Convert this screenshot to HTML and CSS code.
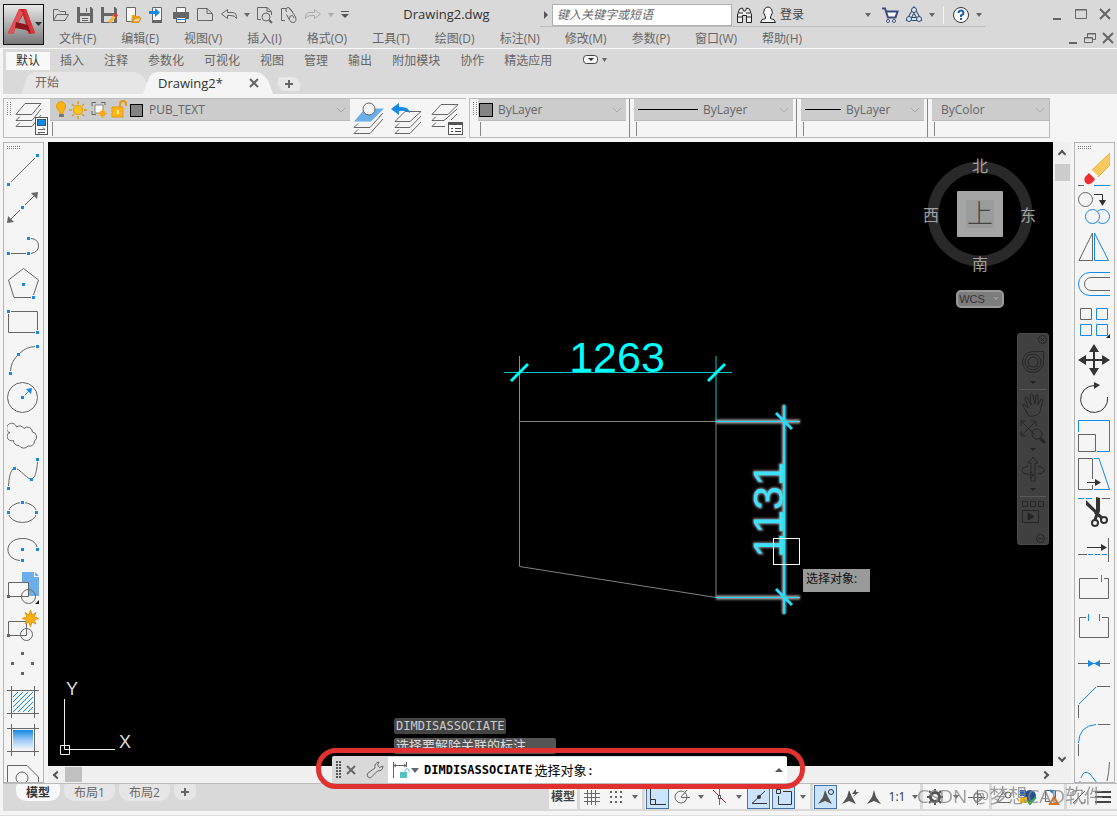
FILE: index.html
```
<!DOCTYPE html>
<html lang="zh-CN">
<head>
	<meta charset="utf-8">
	<title>Drawing2.dwg</title>
	<link rel="stylesheet" href="styles.css">
</head>
<body>

	<header class="header">
		<button class="logo" aria-label="应用程序菜单">
			<svg width="39" height="39" viewBox="0 0 39 39">
				<path d="M4 28 L15 4 H22 L31 28 L25 29 L22 23 L12 22 L9 29 Z" fill="#c4262c"/>
				<path d="M15 4 L19 8 L9 29 L4 28 Z" fill="#e05055"/>
				<path d="M19 10 L22 20 L13 20 Z" fill="#a5a5a5"/>
				<path d="M12 17 L24 20 L28 28 L22 25 L11 23 Z" fill="#8d151b"/>
				<path d="M19 4 H22 L31 28 L27 29 Z" fill="#d93439"/>
				<path d="M31 17 h7 l-3.500 4 z" fill="#333"/>
			</svg>
		</button>
		<div class="header-rows">
			<div class="title-row">
				<div class="quick">
					<button class="tool" aria-label="打开"><svg width="18" height="18"><path class="ink" d="M1.500 14.500 V3.500 H6 L8 5.500 H13.500 V8.500 M1.500 14.500 L5 8.500 H16.500 L13 14.500 Z"/></svg></button>
					<button class="tool" aria-label="保存"><svg width="18" height="18"><path d="M1 1 H15 L17 3 V17 H1 Z" fill="#666"/><path d="M4 1 h10 v6 h-10 z M4 10 h10 v6 h-10 z" fill="#d9d9d9"/><path class="ink" d="M6 12.500 h6 M6 14.500 h6 M10.500 2 v4"/></svg></button>
					<button class="tool" aria-label="另存为"><svg width="18" height="18"><path d="M1 1 H15 L17 3 V17 H1 Z" fill="#666"/><path d="M4 1 h10 v6 h-10 z M4 10 h10 v6 h-10 z" fill="#d9d9d9"/><path d="M8 16 L14 8 L17 10 L11 17 Z" fill="#f2b544"/><path d="M13 9 l2 -2 l3 2 l-2 3 z" fill="#e03030"/></svg></button>
					<button class="tool" aria-label="从云打开"><svg width="18" height="18"><path class="page" d="M2.500 1.500 H11.500 V15.500 H2.500 Z"/><path d="M8 9 h3 l1 1 h4 l-1 7 h-8 z" fill="#e8a317"/><path d="M9 15 l2 -3 h6 l-2 4 h-7z" fill="#f5d08a" stroke="#c98a10"/></svg></button>
					<button class="tool" aria-label="保存到云"><svg width="18" height="18"><path class="page" d="M4.500 1.500 H13.500 V16.500 H4.500 Z"/><path d="M4 14 h10 v3 h-10z" fill="#666"/><path d="M1 5 H7 V2 L12 6.500 L7 11 V8 H1 Z" fill="#1589e6"/></svg></button>
					<button class="tool" aria-label="打印"><svg width="18" height="18"><path class="page" d="M4.500 1.500 h9 v5 h-9 z"/><path d="M1 6 h16 v7 h-3 v-2 h-10 v2 h-3 z" fill="#666"/><path class="page" d="M4.500 11.500 h9 v5 h-9 z"/><path class="blue" d="M5 13.500 h8"/></svg></button>
					<button class="tool" aria-label="新建"><svg width="18" height="18"><path class="ink" d="M1.500 2.500 H11 L16.500 7.500 V14.500 H1.500 Z M11 2.500 V7.500 H16"/></svg></button>
					<button class="tool" aria-label="放弃"><svg width="18" height="18"><path class="ink" d="M1.500 8 L7.500 3.500 V6.500 H13 Q16.500 7 16.500 10.500 V12.500 Q15 9.500 11 9.500 H7.500 V12.500 Z"/></svg></button>
					<button class="drop" aria-label="放弃列表"></button>
					<button class="tool" aria-label="打印预览"><svg width="18" height="18"><path class="ink" d="M5 13.500 H1.500 V1.500 H11 L15.500 5.500 V9 M11 1.500 V5.500 H15"/><circle class="ink" cx="10" cy="11" r="4"/><path class="ink" stroke-width="2" d="M13 14 L16 17"/></svg></button>
					<button class="tool" aria-label="附着"><svg width="18" height="18"><path class="ink" d="M5 14.500 H1.500 V2.500 H6 M9 2.500 L13 6"/><path class="ink" d="M6.500 6 Q5 2 8 1.500 Q10 1.500 11 4 L15.500 11 Q17 15 14 16.500 Q10.500 17 9.500 14 L6.500 8.500 M9.500 13 Q9 9.500 12 9.500 Q13.500 10 14 12"/></svg></button>
					<button class="tool off" aria-label="重做"><svg width="18" height="18"><path class="ink" d="M16.500 8 L10.500 3.500 V6.500 H5 Q1.500 7 1.500 10.500 V12.500 Q3 9.500 7 9.500 H10.500 V12.500 Z"/></svg></button>
					<button class="drop off" aria-label="重做列表"></button>
					<button class="custom" aria-label="自定义快速访问工具栏"><svg width="8" height="8"><path d="M0 0 h8 v1 h-8z M0 3 h8 l-4 4 z" fill="#555"/></svg></button>
				</div>
				<h1 class="title">Drawing2.dwg</h1>
				<div class="info">
					<button class="side-arrow" aria-label="展开搜索"></button>
					<input class="search" type="text" placeholder="键入关键字或短语" aria-label="搜索">
					<button class="tool" aria-label="查找"><svg width="18" height="18"><path d="M2.500 16.500 V9 L4.500 3 L7.500 2 L8.500 5 H10.500 L11.500 2 L14.500 3 L16.500 9 V16.500 H11.500 V9.500 H7.500 V16.500 Z" fill="#eee" stroke="#222"/><path d="M2 11 h5 M12 11 h5 M4 7 h4 M11 7 h4" stroke="#222"/></svg></button>
					<button class="tool" aria-label="用户"><svg width="18" height="18"><path d="M6.500 11 Q3 6 5.500 3 Q9 -1 12.500 3 Q15 6 11.500 11 V12.500 Q16 13 16.500 16.500 H1.500 Q2 13 6.500 12.500 Z" fill="#f8f8f8" stroke="#222"/></svg></button>
					<a class="login" href="#">登录</a>
					<button class="drop" aria-label="登录选项"></button>
					<button class="tool cart" aria-label="应用商店"><svg width="18" height="18"><path d="M1 2.500 H4 L7 11.500 H14.500 L16.500 5.500 H5" fill="#fff" stroke="#394d78" stroke-width="2"/><circle cx="7" cy="15" r="1.500" fill="#fff" stroke="#394d78"/><circle cx="13" cy="15" r="1.500" fill="#fff" stroke="#394d78"/></svg></button>
					<button class="tool" aria-label="保持连接"><svg width="18" height="18"><path d="M9 4 L4 13 H14 Z" fill="none" stroke="#334b68" stroke-width="4"/><path d="M9 4 L4 13 H14 Z" fill="none" stroke="#d8e4f0" stroke-width="2"/><circle cx="9" cy="4" r="2.500" fill="#d8e4f0" stroke="#334b68"/><circle cx="4" cy="13" r="2.500" fill="#d8e4f0" stroke="#334b68"/><circle cx="14" cy="13" r="2.500" fill="#d8e4f0" stroke="#334b68"/></svg></button>
					<button class="drop" aria-label="连接选项"></button>
					<span class="divider"></span>
					<button class="tool" aria-label="帮助"><svg width="18" height="18"><circle cx="9" cy="9" r="7.500" fill="#fff" stroke="#333"/><path d="M6.500 7 Q6.500 4.500 9 4.500 Q11.500 4.500 11.500 7 Q11.500 8.500 9 9.500 V11 M9 12 V14" fill="none" stroke="#1a5fb4" stroke-width="2"/></svg></button>
					<button class="drop" aria-label="帮助选项"></button>
				</div>
				<div class="win">
					<button class="tool" aria-label="最小化"><svg width="18" height="18"><path d="M5 14 h8" class="heavy"/></svg></button>
					<button class="tool" aria-label="最大化"><svg width="18" height="18"><path d="M3.500 4.500 h11 v9 h-11 z M3 5 h12" class="ink"/></svg></button>
					<button class="tool" aria-label="关闭"><svg width="18" height="18"><path d="M4 4 L14 14 M14 4 L4 14" class="heavy"/></svg></button>
				</div>
			</div>
			<div class="menu-row">
				<nav class="menu">
					<a href="#">文件(F)</a>
					<a href="#">编辑(E)</a>
					<a href="#">视图(V)</a>
					<a href="#">插入(I)</a>
					<a href="#">格式(O)</a>
					<a href="#">工具(T)</a>
					<a href="#">绘图(D)</a>
					<a href="#">标注(N)</a>
					<a href="#">修改(M)</a>
					<a href="#">参数(P)</a>
					<a href="#">窗口(W)</a>
					<a href="#">帮助(H)</a>
				</nav>
				<div class="doc-win">
					<button aria-label="最小化图形"><svg width="18" height="18"><path d="M6 14 h8" class="heavy"/></svg></button>
					<button aria-label="还原图形"><svg width="18" height="18"><path d="M3.500 8.500 h8 v5 h-8 z M3 9 h9 M6.500 8 V4.500 h8 v6 H12 M6 5 h9" class="ink"/></svg></button>
					<button aria-label="关闭图形"><svg width="18" height="18"><path d="M4 4 L14 14 M14 4 L4 14" class="heavy"/></svg></button>
				</div>
			</div>
		</div>
	</header>

	<div class="ribbon">
		<nav class="ribbon-tabs">
			<a class="current" href="#">默认</a>
			<a href="#">插入</a>
			<a href="#">注释</a>
			<a href="#">参数化</a>
			<a href="#">可视化</a>
			<a href="#">视图</a>
			<a href="#">管理</a>
			<a href="#">输出</a>
			<a href="#">附加模块</a>
			<a href="#">协作</a>
			<a href="#">精选应用</a>
			<button class="ribbon-min" aria-label="最小化功能区"><svg width="26" height="10"><rect x="0.500" y="0.500" width="14" height="8" rx="3" fill="#f5f5f5" stroke="#444"/><path d="M5 3 h6 l-3 3 z" fill="#333"/><path d="M19 3 h5 l-2.500 4 z" fill="#666"/></svg></button>
		</nav>
		<div class="file-tabs">
			<a class="file-tab" href="#">开始</a>
			<div class="file-tab active">
				<a href="#">Drawing2*</a>
				<button aria-label="关闭选项卡"><svg width="10" height="10"><path d="M1 1 L9 9 M9 1 L1 9" class="heavy"/></svg></button>
			</div>
			<button class="add-tab" aria-label="新图形"><svg width="10" height="10"><path d="M1 5 H9 M5 1 V9" class="heavy"/></svg></button>
		</div>
	</div>

	<!-- layers and properties -->
	<div class="bars">
		<div class="bar">
			<span class="grip"></span>
			<button class="big" aria-label="图层特性">
				<svg width="34" height="36"><path class="ink" d="M2 14.500 L11 3.500 H27 L18 14.500 Z M6 16.500 L2 20.500 H18 L27 9 M6 22.500 L2 26.500 H18 L27 15"/><rect x="21.500" y="17.500" width="12" height="17" fill="#fff" stroke="#555"/><rect x="23.500" y="19.500" width="8" height="6" fill="#1589e6" stroke="#2a5a90"/><path class="ink" d="M24 29.500 h7 m-2 -2 l2 2 M31 32.500 h-7 m2 2 l-2 -2"/></svg>
			</button>
			<div class="field-wrap layer">
				<div class="field">
					<svg width="90" height="20">
						<path d="M6 12 Q1 7 3 4 Q7 -1 11 4 Q13 7 8 14 H6 Z" fill="#f9b414" stroke="#e09a10"/><path d="M5 14 h5 v3 h-5z" fill="#777"/>
						<circle cx="24" cy="10" r="4.500" fill="#ffc414" stroke="#e59b10"/><path d="M24 1 v3 M24 16 v3 M15 10 h3 M30 10 h3 M18 4 l2 2 M30 4 l-2 2 M18 16 l2 -2 M30 16 l-2 -2" stroke="#e59b10" stroke-width="1.500"/>
						<path class="ink" d="M38 6 V2.500 H42 M47 2.500 H51 V5 M38 11 V14.500 H42"/><path d="M41 5 h8 v5 l-3 3 h-5z" fill="#fff" stroke="#888"/><circle cx="48.500" cy="13.500" r="3" fill="#f3a51c"/><path d="M48.500 9 v9 M44 13.500 h9" stroke="#f3a51c"/>
						<path d="M66 8 V4 Q66 1 69 1 Q72 1 72 4 V6" fill="none" stroke="#e59b10" stroke-width="2"/><path d="M58 7 h11 v10 h-11z" fill="#fbb614" stroke="#e59b10"/><path d="M63 10 h1.500 v4 h-1.500z" fill="#fff"/>
						<rect x="76.500" y="4.500" width="12" height="12" fill="#848484" stroke="#000"/>
					</svg>
					<select aria-label="图层"><option>PUB_TEXT</option></select>
					<svg class="chev" width="10" height="6"><path d="M1 1 L5 5 L9 1"/></svg>
				</div>
			</div>
			<button class="big" aria-label="置为当前图层"><svg width="34" height="36"><path d="M2 21.500 L13 8.500 H32 L19 21.500 Z" fill="#6cafe8"/><circle cx="17" cy="9" r="6" fill="#f5f5f5" stroke="#666"/><path class="ink" d="M6 23.500 L2 27.500 H18 L31 13 M6 29.500 L2 33.500 H18 L31 19 M31 13 L27 17"/></svg></button>
			<button class="big wide" aria-label="上一个图层"><svg width="34" height="36"><path class="ink" d="M4 21.500 L14 11.500 H30 L19 21.500 Z M8 23.500 L4 27.500 H19 L30 16 M8 29.500 L4 33.500 H19 L30 22"/><path d="M0 9 L8 3 V7 Q18 6 19 13 Q15 10 8 11 V15 Z" fill="#1589e6"/></svg></button>
			<button class="big" aria-label="图层状态"><svg width="34" height="36"><path class="ink" d="M2 14.500 L11 4.500 H28 L18 14.500 Z M6 16.500 L2 20.500 H14 L27 9 M6 22.500 L2 26.500 H15 M21 20 L27 14"/><rect x="18.500" y="22.500" width="14" height="12" fill="#fff" stroke="#555"/><path d="M18 23.500 h15" stroke="#555" stroke-width="3"/><path d="M21 28.500 h2 M25 28.500 h6 M21 31.500 h2 M25 31.500 h6" stroke="#444"/></svg></button>
		</div>
		<div class="bar props">
			<span class="grip"></span>
			<div class="field-wrap color">
				<div class="field">
					<span class="swatch"></span>
					<select aria-label="颜色"><option>ByLayer</option></select>
					<svg class="chev" width="10" height="6"><path d="M1 1 L5 5 L9 1"/></svg>
				</div>
			</div>
			<div class="field-wrap line">
				<div class="field">
					<span class="sample long"></span>
					<select aria-label="线型"><option>ByLayer</option></select>
					<svg class="chev" width="10" height="6"><path d="M1 1 L5 5 L9 1"/></svg>
				</div>
			</div>
			<div class="field-wrap weight">
				<div class="field">
					<span class="sample"></span>
					<select aria-label="线宽"><option>ByLayer</option></select>
					<svg class="chev" width="10" height="6"><path d="M1 1 L5 5 L9 1"/></svg>
				</div>
			</div>
			<div class="field-wrap plot">
				<div class="field">
					<select aria-label="打印样式"><option>ByColor</option></select>
					<svg class="chev" width="10" height="6"><path d="M1 1 L5 5 L9 1"/></svg>
				</div>
			</div>
		</div>
	</div>

	<main class="work">
		<!-- draw toolbar -->
		<div class="palette">
			<span class="grip-h"></span>
			<button aria-label="直线"><svg width="32" height="38"><path class="ink" d="M4 31 L28 7"/><path class="node" d="M0 32h3v3h-3z M29 3h3v3h-3z"/></svg></button>
			<button aria-label="构造线"><svg width="32" height="38"><path class="ink" d="M3 31 L13 21 M18 16 L28 6"/><path class="solid" d="M0 34 L1 27 L7 33 Z M31 3 L24 4 L30 10 Z"/><path class="node" d="M14 17h3v3h-3z"/></svg></button>
			<button aria-label="多段线"><svg width="32" height="38"><path class="ink" d="M4 26.500 H19 M24 26.500 Q31.500 25 31.500 19 Q31.500 12 24 11.500"/><path class="node" d="M0 25h3v3h-3z M20 25h3v3h-3z M20 10h3v3h-3z"/></svg></button>
			<button aria-label="多边形"><svg width="32" height="38"><path class="ink" d="M26.500 30 L31.500 15 L16.500 3.500 L1.500 15 L7 32.500 H24"/><path class="node" d="M15 18h3v3h-3z M25 31h3v3h-3z"/></svg></button>
			<button aria-label="矩形"><svg width="32" height="38"><path class="ink" d="M4 8.500 H30.500 V27 M28 29.500 H1.500 V11"/><path class="node" d="M0 7h3v3h-3z M29 28h3v3h-3z"/></svg></button>
			<button aria-label="圆弧"><svg width="32" height="38"><path class="ink" d="M3.500 30 Q4 21 10 15 M13 12 Q19 6 28 5.500"/><path class="node" d="M2 31h3v3h-3z M10 12h3v3h-3z M29 4h3v3h-3z"/></svg></button>
			<button aria-label="圆"><svg width="32" height="38"><circle class="ink" cx="15.500" cy="18.500" r="15"/><path class="blue" d="M18 16 L23 11"/><path d="M25 9 L19 10 L24 15 Z M14 17h3v3h-3z" class="node"/></svg></button>
			<button aria-label="修订云线"><svg width="32" height="38"><path class="ink" d="M3 16 A5 5 0 1 1 9.500 10 A5 5 0 0 1 17 11.500 A5 5 0 0 1 25.500 15 A5 5 0 0 1 27.500 24 A5 5 0 0 1 21 29 A5.500 5.500 0 0 1 12 28.500 A5 5 0 0 1 6.500 23.500 A4.500 4.500 0 0 1 3 15"/></svg></button>
			<button aria-label="样条曲线"><svg width="32" height="38"><path class="ink" d="M1.500 31 C2 23 3 17 6 14 M10 14 C13 15 19 22 23 24 M26 23 C29 21 30 13 30.500 7"/><path class="node" d="M0 32h3v3h-3z M6 12h3v3h-3z M23 23h3v3h-3z M29 3h3v3h-3z"/></svg></button>
			<button aria-label="椭圆"><svg width="32" height="38"><ellipse class="ink" cx="15.500" cy="19.500" rx="14" ry="10"/><path class="node halo" d="M14 8h3v3h-3z M0 18h3v3h-3z M28 18h3v3h-3z"/></svg></button>
			<button aria-label="椭圆弧"><svg width="32" height="38"><path class="ink" d="M13 29.500 C-4 28 -3 7.500 15.500 7.500 C23 7.500 29 11 30 16"/><path class="node" d="M14 17h3v3h-3z M29 17h3v3h-3z M14 28h3v3h-3z"/></svg></button>
			<button aria-label="插入块"><svg width="32" height="38"><path d="M15 3 H27 V8 H32 V27 H15 Z M28 3 L32 7 H28 Z" fill="#6cafe8"/><path class="page" d="M1.500 13.500 H21.500 V27.500 H1.500 Z"/><circle class="ink" cx="21.500" cy="27.500" r="7"/><path class="solid" d="M0 26h3v3h-3z"/><path d="M32 31 V35 H28 Z" fill="#222"/></svg></button>
			<button aria-label="创建块"><svg width="32" height="38"><path class="ink" d="M1.500 14.500 H19.500 V28.500 H1.500 Z"/><circle class="ink" cx="19.500" cy="27.500" r="6"/><path d="M23.500 3 L25 8 L29 5.500 L27 10 L32 11.500 L27 13 L29 17 L25 15 L23.500 20 L22 15 L18 17 L20 13 L15 11.500 L20 10 L18 5.500 L22 8 Z" fill="#f9b014" stroke="#e09a10"/><path class="solid" d="M0 27h3v3h-3z"/></svg></button>
			<button aria-label="点"><svg width="32" height="38"><path class="solid" d="M14 7h3v3h-3z M4 17h3v3h-3z M24 17h3v3h-3z M14 27h3v3h-3z"/></svg></button>
			<button aria-label="图案填充"><svg width="32" height="38"><path class="ink" d="M0 7.500 H32 M0 30.500 H32 M4.500 3 V35 M27.500 3 V35"/><path class="blue" d="M6 14 L11 9 M6 19 L16 9 M6 24 L21 9 M6 29 L26 9 M11 29 L26 14 M16 29 L26 19 M21 29 L26 24"/></svg></button>
			<button aria-label="渐变色"><svg width="32" height="38"><defs><linearGradient id="fade" x2="0" y2="1"><stop offset="0" stop-color="#1589e6"/><stop offset="0.500" stop-color="#9ec8f6"/><stop offset="1" stop-color="#f5f5f5"/></linearGradient></defs><path class="ink" d="M0 7.500 H32 M0 30.500 H32 M4.500 3 V35 M27.500 3 V35"/><rect x="6" y="9" width="20" height="20" fill="url(#fade)"/></svg></button>
			<button aria-label="面域"><svg width="32" height="38"><path class="ink" d="M0.500 34 V6.500 H20 L31.500 18 V34"/><circle class="ink" cx="15" cy="19" r="6"/></svg></button>
		</div>

		<div class="view">
			<div class="canvas">
				<svg class="drawing" width="100%" height="100%">
					<path d="M471.500 279.500 H668 V455.500 L471.500 424.500 Z" fill="none" stroke="#808080"/>
					<!-- horizontal dimension -->
					<g class="dim">
						<path d="M456 230.500 H684 M471.500 214 V279 M668 214 V279" stroke="#00c8c8"/>
						<path d="M463 239 L480 222 M660 239 L677 222" stroke-width="3"/>
						<text x="569" y="230" text-anchor="middle">1263</text>
					</g>
					<!-- vertical dimension, highlighted -->
					<g class="glow">
						<path d="M668 279.500 H752 M668 455.500 H752 M736 263 V472"/>
						<text transform="translate(735 368) rotate(-90)" text-anchor="middle">1131</text>
					</g>
					<g class="dim hot">
						<path d="M668 279.500 H752 M668 455.500 H752"/>
						<path d="M736 263 V472" stroke-width="2"/>
						<path d="M728 271 L744 287 M728 447 L744 463" stroke-width="3"/>
						<text transform="translate(735 368) rotate(-90)" text-anchor="middle">1131</text>
					</g>
					<rect x="725.500" y="396.500" width="26" height="26" fill="none" stroke="#fff"/>
				</svg>
				<span class="prompt">选择对象:</span>

				<svg class="ucs" width="90" height="90">
					<path d="M8.500 29 V79.500 H59 M4.500 75.500 h9 v9 h-9 z" fill="none" stroke="#eee"/>
					<text x="16" y="25" text-anchor="middle">Y</text>
					<text x="69" y="78" text-anchor="middle">X</text>
				</svg>

				<svg class="cube" width="124" height="144">
					<circle cx="62" cy="72" r="47" fill="none" stroke="#292929" stroke-width="11"/>
					<rect x="39" y="49" width="46" height="46" rx="1" fill="#a5a5a5"/>
					<rect x="48" y="58" width="28" height="28" fill="#999c9b"/>
					<text class="top" x="62" y="81">上</text>
					<text x="62" y="30">北</text>
					<text x="62" y="128">南</text>
					<text x="13" y="79">西</text>
					<text x="110" y="79">东</text>
				</svg>
				<button class="wcs">WCS<svg width="10" height="6"><path d="M1 0.500 H9 L5 5 Z" fill="#999" stroke="#777"/></svg></button>

				<div class="navbar">
					<button aria-label="关闭导航栏" class="tiny"><svg width="9" height="9"><circle cx="4.500" cy="4.500" r="4"/><path d="M3 3 l3 3 M6 3 l-3 3"/></svg></button>
					<button aria-label="控制盘"><svg width="26" height="30"><path d="M23.500 4.500 V15 A10.500 10.500 0 1 1 13 4.500 Z"/><circle cx="13" cy="15" r="8"/><circle cx="13" cy="15" r="5"/><path d="M7 21 l3 -3 M19 21 l-3 -3"/></svg></button>
					<i class="nav-drop"></i>
					<hr>
					<button aria-label="平移"><svg width="26" height="30"><path d="M9 26 L3 16 Q2 13 5 15 L8 18 L5 8 Q6 5 8 9 L11 15 L10 5 Q12 2 13 6 L15 14 L16 5 Q18 3 18 7 L18 15 L21 9 Q24 8 22 13 L20 22 Q17 27 9 26 Z"/></svg></button>
					<button aria-label="范围缩放"><svg width="26" height="24"><path d="M2 2 L15 15 M15 2 L2 15 M1 6 V1 H6 M11 1 H16 V6 M1 11 V16 H6" /><circle cx="17" cy="14" r="5"/><path d="M20 18 L25 23" stroke-width="3"/></svg></button>
					<i class="nav-drop"></i>
					<button aria-label="动态观察"><svg width="26" height="28"><path d="M11 25 V7 H8 L13 1 L18 7 H15 V25 Z"/><path d="M8 10 Q1 12 2 15 Q4 19 14 19 M14 19 l-4 -3 M14 19 l-4 3 M18 10 Q25 12 24 15 Q23 18 18 18"/></svg></button>
					<i class="nav-drop"></i>
					<hr>
					<button aria-label="动画"><svg width="26" height="28"><path d="M2.500 4.500 h5 v5 h-5z M10.500 4.500 h5 v5 h-5z M18.500 4.500 h5 v5 h-5z M2.500 13.500 h16 v12 h-16z"/><path d="M8 16 L14 19.500 L8 23 Z" fill="#222"/></svg></button>
					<button aria-label="自定义导航栏" class="tiny last"><svg width="9" height="9"><circle cx="4.500" cy="4.500" r="4"/><path d="M2 4.500 h5"/></svg></button>
				</div>
			</div>
			<div class="vscroll"><i class="up"></i><span class="thumb"></span><i class="down"></i></div>
			<div class="hscroll"><i class="left"></i><span class="thumb"></span><i class="right"></i></div>

			<div class="history">
				<span>DIMDISASSOCIATE</span>
				<span class="second">选择要解除关联的标注</span>
			</div>
			<div class="command">
				<span class="grip dark"></span>
				<button aria-label="关闭命令行"><svg width="12" height="12"><path d="M2 2 L10 10 M10 2 L2 10" class="heavy"/></svg></button>
				<button class="wrench" aria-label="自定义"><svg width="18" height="18"><path class="ink" d="M2 16 Q0 14 2 12 L9 7 Q8 2 13 1 L11.500 4 L13.500 6.500 L17 5 Q17 10 11.500 10 L5 16.500 Q3.500 17.500 2 16 Z"/></svg></button>
				<label for="cmd">
					<svg width="28" height="18"><path class="ink" d="M1.500 1 V17 M14.500 1 V6 M2 4.500 H14 M4 3 L2 4.500 L4 6 M12 3 L14 4.500 L12 6"/><path d="M8 11 h7 v6 h-7z" fill="#52c4c4"/><path d="M13 11 V9 Q15 6 17 9 V11" fill="none" stroke="#52c4c4"/><path d="M19 7 h8 l-4 5 z" fill="#666"/></svg>
					DIMDISASSOCIATE
				</label>
				<input id="cmd" type="text" value="选择对象:">
				<button class="cmd-up" aria-label="最近的命令"></button>
				<span class="callout"></span>
			</div>
		</div>

		<!-- modify toolbar -->
		<div class="palette">
			<span class="grip-h"></span>
			<button aria-label="删除"><svg width="32" height="38"><path d="M14 19 L32 2 V14 L20 26 Z" fill="#f8c95c" stroke="#e8b040"/><path d="M11 22 L14 19 L20 25 L17 28 Z" fill="#fff"/><path d="M7 26 L11 22 L17 28 Q14 34 9 33 Q5 30 7 26 Z" fill="#ee2e35"/><path class="ink" d="M0 34.500 H6"/><path class="blue" d="M16 34.500 H32"/></svg></button>
			<button aria-label="复制"><svg width="32" height="38"><circle class="ink" cx="7.500" cy="10.500" r="7"/><path class="dark" d="M16 5.500 H24.500 V12"/><path d="M21 11 H28 L24.500 17 Z" fill="#333"/><circle class="blue" cx="24.500" cy="27.500" r="7"/><circle cx="14.500" cy="27.500" r="7" fill="#f5f5f5" stroke="#1589e6"/></svg></button>
			<button aria-label="镜像"><svg width="32" height="38"><path class="ink" d="M14.500 6 V33.500 H1 Z"/><path class="blue" d="M16.500 6 V33.500 H30.500 Z"/></svg></button>
			<button aria-label="偏移"><svg width="32" height="38"><path class="blue" d="M32 7.500 H12 A11.500 11.500 0 0 0 12 30.500 H32"/><path class="ink" d="M32 12.500 H13 A6.500 6.500 0 0 0 13 25.500 H32"/></svg></button>
			<button aria-label="阵列"><svg width="32" height="38"><path class="ink" d="M2.500 5.500 h11 v11 h-11z"/><path class="blue" d="M18.500 5.500 h11 v11 h-11z M2.500 21.500 h11 v11 h-11z M18.500 21.500 h11 v11 h-11z"/><path d="M32 31 V35 H28 Z" fill="#222"/></svg></button>
			<button aria-label="移动"><svg width="32" height="38"><path d="M16 7 V31 M4 19 H28" stroke="#333" stroke-width="2"/><path d="M16 3 L21 11 H11 Z M16 35 L21 27 H11 Z M0 19 L8 14 V24 Z M32 19 L24 14 V24 Z" fill="#333"/></svg></button>
			<button aria-label="旋转"><svg width="32" height="38"><path class="dark" d="M29.500 18 A13.500 13.500 0 1 1 16 6.500"/><path d="M16 3 L22 6 L16 10 Z" fill="#333"/></svg></button>
			<button aria-label="缩放"><svg width="32" height="38"><path class="blue" d="M0.500 15 V3.500 H31.500 V34.500 H19"/><path class="ink" d="M0.500 17.500 h17 v17 h-17z"/></svg></button>
			<button aria-label="拉伸"><svg width="32" height="38"><path class="ink" d="M14.500 24 V3.500 H0.500 V34.500 H14.500 V30"/><path class="blue" d="M16 3.500 H21 L31.500 34.500 H16"/><path class="dark" d="M9 27.500 H18"/><path d="M17 24 L23 27.500 L17 31 Z" fill="#333"/></svg></button>
			<button aria-label="修剪"><svg width="32" height="38"><path class="blue" d="M0 5.500 H16" stroke-dasharray="6 2"/><path class="ink" d="M24 5.500 H32"/><path d="M18 4 L22 5 V18 L20 23 L8 12 V7 L18 17 Z" fill="#333"/><circle class="dark" stroke-width="2" cx="17" cy="30" r="3"/><circle class="dark" stroke-width="2" cx="26" cy="27" r="3"/><path d="M17 27 L20 18 M24 25 L17 19" stroke="#333" stroke-width="3"/></svg></button>
			<button aria-label="延伸"><svg width="32" height="38"><path class="dark" d="M9 16.500 H24"/><path d="M23 13 L29 16.500 L23 20 Z" fill="#333"/><path class="ink" d="M30.500 7 V31 M0 23.500 H9"/><path class="blue" d="M10 23.500 H30" stroke-dasharray="5 2"/></svg></button>
			<button aria-label="打断于点"><svg width="32" height="38"><path class="ink" d="M20 9.500 H1.500 V29.500 H30.500 V9.500 H26"/><path class="blue" d="M23.500 6 V13"/></svg></button>
			<button aria-label="打断"><svg width="32" height="38"><path class="ink" d="M8 10.500 H1.500 V30.500 H30.500 V10.500 H24"/><path class="blue" d="M10.500 7 V14 M21.500 7 V14"/></svg></button>
			<button aria-label="合并"><svg width="32" height="38"><path class="ink" d="M0 18.500 H32"/><path class="node" d="M10 15 L16 18.500 L10 22 Z M22 15 L16 18.500 L22 22 Z"/></svg></button>
			<button aria-label="倒角"><svg width="32" height="38"><path class="ink" d="M19 3.500 H32 M0.500 22 V35"/><path class="blue" d="M1 21 L18 4"/></svg></button>
			<button aria-label="圆角"><svg width="32" height="38"><path class="ink" d="M20 3.500 H32 M0.500 23 V35"/><path class="blue" d="M0.500 22 Q1 5 18 3.500"/></svg></button>
			<button aria-label="光顺曲线"><svg width="32" height="38"><path class="ink" d="M31.500 3 Q31 14 29 22 M0.500 34 Q1 26 2 22"/><path class="blue" d="M3 19 Q6 10 12 15 L19 24 Q23 30 28 24"/></svg></button>
		</div>
	</main>

	<footer class="footer">
		<nav class="layouts">
			<a class="current" href="#">模型</a>
			<a href="#">布局1</a>
			<a href="#">布局2</a>
			<button aria-label="新建布局"><svg width="10" height="10"><path d="M1 5 H9 M5 1 V9" class="heavy"/></svg></button>
		</nav>
		<div class="status">
			<div class="group"><button class="model">模型</button></div>
			<div class="group">
				<button aria-label="栅格"><svg width="18" height="18"><path class="ink" d="M1 5.500 H17 M1 9.500 H17 M1 13.500 H17 M4.500 2 V17 M8.500 2 V17 M12.500 2 V17"/></svg></button>
				<button aria-label="捕捉"><svg width="18" height="18"><path class="solid" d="M3 3h2v2h-2z M8 3h2v2h-2z M13 3h2v2h-2z M3 8h2v2h-2z M8 8h2v2h-2z M13 8h2v2h-2z M3 13h2v2h-2z M8 13h2v2h-2z M13 13h2v2h-2z"/></svg></button>
				<button class="drop" aria-label="捕捉设置"></button>
			</div>
			<div class="group">
				<button class="on" aria-label="正交"><svg width="18" height="18"><path class="dark" d="M1.500 1 V16.500 H17 M1.500 11.500 h5 v5"/></svg></button>
				<button aria-label="极轴"><svg width="18" height="18"><circle class="ink" cx="8" cy="9" r="6"/><path class="ink" d="M8 9.500 H17 M8 9 L14 2"/></svg></button>
				<button class="drop" aria-label="极轴设置"></button>
				<button aria-label="等轴测"><svg width="18" height="18"><path class="iso-red" d="M2 2 L15 15"/><path class="iso-green" d="M8.500 1 V17"/><rect x="7.500" y="7.500" width="2" height="3" fill="#fff" stroke="#555"/></svg></button>
				<button class="drop" aria-label="等轴测设置"></button>
				<button class="on" aria-label="对象捕捉追踪"><svg width="18" height="18"><path class="dark" d="M15 3 L2 15.500 H17"/><circle cx="9" cy="9" r="2" fill="#333"/></svg></button>
				<button class="on" aria-label="对象捕捉"><svg width="18" height="18"><path class="dark" d="M1.500 1.500 h4 v4 h-4z M8 3.500 H16.500 V16.500 H3.500 V8"/></svg></button>
				<button class="drop" aria-label="捕捉模式"></button>
			</div>
			<div class="group">
				<button class="on" aria-label="注释可见性"><svg width="18" height="18"><path class="person" d="M8 2 L11 9 L15 16 L8 13 L1 16 L6 9 Z"/><circle class="dark" cx="14" cy="4" r="2.500"/></svg></button>
				<button aria-label="自动缩放"><svg width="18" height="18"><path class="person" d="M8 2 L11 9 L15 16 L8 13 L1 16 L6 9 Z M15 1 L11 6 H14 L12 9 L18 4 H15 Z"/></svg></button>
				<button aria-label="注释"><svg width="18" height="18"><path class="person" d="M9 2 L11 9 L16 16 L9 13 L2 16 L7 9 Z"/></svg></button>
				<button class="scale">1:1</button>
				<button class="drop" aria-label="注释比例"></button>
			</div>
			<div class="group tray">
				<button aria-label="切换工作空间"><svg width="18" height="18"><circle cx="9" cy="9" r="4.500" fill="none" stroke="#555" stroke-width="3"/><path d="M9 1 V4 M9 14 V17 M1 9 H4 M14 9 H17 M3 3 l3 3 M12 12 l3 3 M15 3 l-3 3 M6 12 l-3 3" stroke="#555" stroke-width="2"/></svg></button>
				<button class="drop" aria-label="工作空间"></button>
				<button aria-label="注释监视器"><svg width="18" height="18"><circle class="ink" cx="9.500" cy="9.500" r="4"/><path class="ink" d="M0 9.500 H17 M9.500 2 V17"/></svg></button>
			</div>
			<div class="group">
				<button aria-label="隔离对象"><svg width="18" height="18"><path class="ink" d="M2 14 L8 4 L12 10 M2 14.500 H15"/><circle class="ink" cx="13" cy="7" r="3"/></svg></button>
				<button aria-label="硬件加速"><svg width="18" height="18"><path d="M1 2 h6 v6 h-6z" fill="#2a64b8"/><circle cx="11" cy="8" r="6" fill="#244f92"/><path d="M1 9 h7 v6 h-7z" fill="#f5b915"/><path d="M8 12 l3 4 l6 -7" fill="none" stroke="#34a853" stroke-width="2"/></svg></button>
				<button aria-label="系统变量"><svg width="18" height="18"><path class="ink" d="M2.500 2.500 h10 v11 h-10z"/><path d="M7 2 l3 3" stroke="#1589e6" stroke-width="2"/><path d="M11 9 L15 16 H7 Z" fill="#fff" stroke="#e46c20" stroke-width="2"/></svg></button>
			</div>
			<div class="group last">
				<button aria-label="全屏显示"><svg width="18" height="18"><path class="ink" d="M3 7 V3 H7 M11 15 H15 V11 M3 15 L15 3"/></svg></button>
				<button aria-label="自定义"><svg width="18" height="18"><path d="M1 4 H17 M1 9 H17 M1 14 H17" stroke="#444" stroke-width="2"/></svg></button>
			</div>
			<span class="watermark">CSDN @梦想CAD软件</span>
		</div>
	</footer>

</body>
</html>
```
FILE: styles.css
```
* {
	box-sizing: border-box;
}
body {
	margin: 0;
	height: 100vh;
	display: flex;
	flex-direction: column;
	overflow: hidden;
	border-bottom: 1px solid #ddd;
	background-color: #f5f5f5;
	font-family: "Open Sans", "Noto Sans CJK SC", sans-serif;
	font-size: 12px;
	line-height: 16px;
	color: #666;
}
a {
	color: inherit;
	text-decoration: none;
	white-space: nowrap;
}
button, input, select {
	margin: 0;
	padding: 0;
	border: 0;
	background: none;
	font: inherit;
	color: inherit;
}
button {
	display: flex;
	align-items: center;
	justify-content: center;
	flex: none;
}
svg {
	display: block;
	flex: none;
}

/* strokes shared by the icons */
.ink {
	fill: none;
	stroke: #666;
}
.dark {
	fill: none;
	stroke: #333;
}
.blue {
	fill: none;
	stroke: #1589e6;
}
.heavy {
	fill: none;
	stroke: #666;
	stroke-width: 2;
}
.page {
	fill: #f8f8f8;
	stroke: #666;
}
.node {
	fill: #1589e6;
}
.halo {
	stroke: #f5f5f5;
	stroke-width: 2;
	paint-order: stroke;
}
.solid {
	fill: #666;
}
.person {
	fill: #555;
}
.iso-red {
	stroke: #d02020;
}
.iso-green {
	stroke: #1f9a4c;
}

/* header */
.header {
	display: flex;
	flex: none;
	height: 49px;
	padding-left: 3px;
	background-color: #d9d9d9;
	border-bottom: 1px solid #f8f8f8;
}
.logo {
	width: 41px;
	height: 41px;
	margin: 4px 5px 0 0;
	border: 1px solid #111;
	background: linear-gradient(#e8e8e8, #777);
}
.header-rows {
	flex: 1;
	min-width: 0;
}
.title-row {
	display: flex;
	height: 28px;
}
.quick, .info, .win {
	display: flex;
	align-items: center;
	flex: none;
}
.quick {
	height: 28px;
	padding-top: 1px;
}
.tool {
	width: 24px;
	height: 26px;
}
.off {
	opacity: 0.4;
}
.drop {
	width: 12px;
	height: 24px;
}
.drop::before {
	content: "";
	border: 3px solid transparent;
	border-top: 4px solid #666;
	border-bottom: 0;
}
.custom {
	width: 16px;
}
.title {
	flex: 1;
	margin: 0;
	font-size: 13px;
	font-weight: normal;
	line-height: 28px;
	text-align: center;
	color: #333;
}
.info {
	height: 27px;
	border-bottom: 1px solid #bdbdbd;
	padding-top: 3px;
}
.side-arrow {
	width: 12px;
	height: 20px;
}
.side-arrow::before {
	content: "";
	border: 4px solid transparent;
	border-left-color: #555;
	border-right: 0;
}
.search {
	width: 180px;
	height: 22px;
	padding: 0 4px;
	border: 1px solid #b0b0b0;
	background-color: #fff;
}
.search::placeholder {
	font-style: italic;
	color: #666;
	opacity: 1;
}
.login {
	width: 82px;
	color: #444;
}
.cart {
	margin-left: 4px;
}
.divider {
	width: 1px;
	height: 18px;
	margin: 0 5px;
	background-color: #f5f5f5;
}
.win {
	margin-left: 60px;
	height: 28px;
}
.menu-row {
	display: flex;
	justify-content: space-between;
	height: 20px;
}
.menu {
	display: flex;
	gap: 25px;
	padding: 3px 0 0 10px;
}
.doc-win {
	display: flex;
	align-items: center;
}

/* ribbon */
.ribbon {
	flex: none;
	height: 45px;
	margin-left: 3px;
	background-color: #d9d9d9;
}
.ribbon-tabs {
	display: flex;
	padding: 3px 0 0 3px;
}
.ribbon-tabs a {
	height: 18px;
	padding: 0 10px;
	line-height: 18px;
}
.ribbon-tabs .current {
	background-color: #f8f8f8;
	color: #333;
}
.ribbon-min {
	margin-left: 21px;
	height: 16px;
}
.file-tabs {
	display: flex;
	height: 24px;
	padding: 2px 0 0 22px;
}
.file-tab {
	position: relative;
	z-index: 0;
	width: 122px;
	height: 22px;
	padding: 0 10px;
	line-height: 22px;
}
.file-tab::before, .file-tab::after {
	content: "";
	position: absolute;
	z-index: -1;
	top: 0;
	bottom: 0;
	left: 0;
	width: 60%;
	border-radius: 6px 0 0 0;
	background-color: #e6e6e6;
	transform: skewX(-20deg);
}
.file-tab::after {
	left: 40%;
	border-radius: 0 10px 0 0;
	transform: skewX(20deg);
}
.file-tab.active {
	z-index: 1;
	display: flex;
	align-items: center;
	justify-content: space-between;
	padding-left: 11px;
	font-size: 13px;
	color: #333;
}
.file-tab.active::before, .file-tab.active::after {
	background-color: #f5f5f5;
}
.add-tab {
	width: 22px;
	height: 14px;
	margin: 5px 0 0 9px;
	border-radius: 2px 8px 2px 8px;
	background-color: #e8e8e8;
}

/* toolbars below the ribbon */
.bars {
	display: flex;
	flex: none;
	gap: 3px;
	height: 48px;
	padding: 4px 3px;
}
.bar {
	display: flex;
	height: 40px;
	padding-left: 3px;
	border: 1px solid #bbb;
	border-right-width: 0;
}
.props {
	border-right-width: 1px;
}
.grip {
	flex: none;
	width: 4px;
	height: 14px;
	margin: 3px 1px 0 0;
	background: repeating-linear-gradient(transparent 0 1px, #f5f5f5 1px 2px), repeating-linear-gradient(90deg, #888 0 1px, transparent 1px 3px);
}
.big {
	width: 38px;
	height: 38px;
}
.big.wide {
	width: 40px;
}
.field-wrap {
	flex: none;
	height: 38px;
	position: relative;
}
.field-wrap::after {
	content: "";
	display: block;
	width: 1px;
	height: 14px;
	margin: 1px 0 0 2px;
	background-color: #888;
}
.field {
	display: flex;
	align-items: center;
	height: 22px;
	padding: 0 4px;
	background-color: #ccc;
	border-bottom: 1px solid #bbb;
}
.layer {
	width: 300px;
}
.color {
	width: 148px;
}
.line, .weight, .plot {
	margin-left: 3px;
	padding-left: 4px;
	border-left: 1px solid #888;
}
.line {
	width: 164px;
}
.weight {
	width: 128px;
}
.plot {
	width: 122px;
}
.field select {
	flex: 1;
	min-width: 0;
	appearance: none;
	padding-left: 5px;
	color: #666;
}
.chev {
	fill: none;
	stroke: #aaa;
	pointer-events: none;
}
.color .field {
	padding-left: 1px;
}
.swatch {
	width: 14px;
	height: 14px;
	border: 1px solid #000;
	background-color: #848484;
}
.sample {
	width: 36px;
	height: 1px;
	background-color: #000;
}
.sample.long {
	width: 60px;
}

/* work area */
.work {
	display: flex;
	flex: 1;
	min-height: 0;
	padding: 0 2px 0 3px;
}
.palette {
	flex: none;
	width: 41px;
	padding: 3px 4px 0 3px;
	overflow: hidden;
	border: 1px solid #b5b5b5;
}
.grip-h {
	display: block;
	width: 14px;
	height: 3px;
	margin-bottom: 2px;
	background: repeating-linear-gradient(90deg, transparent 0 1px, #f5f5f5 1px 2px), repeating-linear-gradient(#777 0 1px, transparent 1px 2px);
}
.view {
	position: relative;
	z-index: 1;
	flex: 1;
	display: grid;
	grid-template-columns: 1fr 18px;
	grid-template-rows: 1fr 17px;
	margin: 0 3px 0 4px;
	background-color: #f0f0f0;
}
.canvas {
	position: relative;
	overflow: hidden;
	background-color: #000;
}
.drawing {
	position: absolute;
	top: 0;
	left: 0;
}
.dim path, .glow path {
	fill: none;
	stroke: #0ff;
}
.dim path[stroke] {
	stroke: #00c8c8;
}
.dim text, .glow text {
	font-family: "Liberation Sans", sans-serif;
	font-size: 43px;
	font-kerning: none;
	fill: #0ff;
}
.glow {
	filter: blur(1px);
}
.glow path {
	stroke: #aaa;
	stroke-width: 4;
}
.glow text {
	fill: #999;
	stroke: #888;
	stroke-width: 2;
}
.hot path {
	stroke: #28dcff;
}
.hot text {
	fill: #3ce2ff;
}
.prompt {
	position: absolute;
	top: 427px;
	left: 755px;
	width: 67px;
	height: 23px;
	padding: 2px 3px;
	background-color: #999b9a;
	color: #111;
}
.ucs {
	position: absolute;
	left: 8px;
	bottom: 6px;
}
.ucs text {
	font-family: "Liberation Sans", sans-serif;
	font-size: 18px;
	fill: #ddd;
}
.cube {
	position: absolute;
	top: 0;
	right: 11px;
}
.cube text {
	font-size: 16px;
	text-anchor: middle;
	fill: #a0a0a0;
}
.cube .top {
	font-size: 26px;
	font-weight: 300;
	fill: #444;
}
.wcs {
	position: absolute;
	top: 148px;
	right: 49px;
	width: 48px;
	height: 18px;
	padding-bottom: 1px;
	gap: 6px;
	border: 2px solid #999;
	border-radius: 5px;
	background-color: #7d7d7d;
	font-family: "Liberation Sans", sans-serif;
	font-size: 11px;
	color: #333;
}
.navbar {
	position: absolute;
	top: 191px;
	right: 4px;
	display: flex;
	flex-direction: column;
	align-items: center;
	width: 32px;
	height: 212px;
	padding: 1px;
	border: 1px solid #4a4a4a;
	border-radius: 3px;
	background-color: #404040;
}
.navbar svg {
	fill: none;
	stroke: #262626;
}
.tiny {
	align-self: flex-end;
	margin-bottom: 3px;
}
.tiny.last {
	margin: auto 0 0;
}
.nav-drop {
	margin: 4px 0 5px;
	border: 3px solid transparent;
	border-top-color: #222;
	border-bottom: 0;
}
.navbar hr {
	width: 26px;
	margin: 0;
	border: 0;
	border-top: 1px solid #5a5a5a;
}
.vscroll, .hscroll {
	display: flex;
	align-items: center;
}
.vscroll {
	flex-direction: column;
	grid-row: 1 / 3;
	grid-column: 2;
	padding: 8px 0 22px;
}
.hscroll {
	grid-column: 1;
	padding: 0 5px;
}
.vscroll .thumb {
	width: 15px;
	height: 17px;
	margin-top: 7px;
	background-color: #ccc;
}
.hscroll .thumb {
	width: 17px;
	height: 15px;
	margin-left: 5px;
	background-color: #c0c0c0;
}
.vscroll i, .hscroll i {
	width: 6px;
	height: 6px;
	border: solid #555;
	border-width: 2px 0 0 2px;
}
.up {
	transform: rotate(45deg);
	margin-top: 1px;
}
.down {
	margin-top: auto;
	transform: rotate(225deg);
}
.left {
	margin-left: 1px;
	transform: rotate(-45deg);
}
.right {
	margin-left: auto;
	transform: rotate(135deg);
}

/* command line, floats over the canvas */
.history {
	position: absolute;
	left: 346px;
	bottom: 29px;
	display: flex;
	flex-direction: column;
	align-items: flex-start;
	gap: 4px;
	height: 36px;
	overflow: hidden;
	font-family: "DejaVu Sans Mono", "Noto Sans CJK SC", monospace;
	color: #ccc;
}
.history span {
	flex: none;
	padding: 0 2px;
	border-radius: 2px;
	background-color: #444;
}
.history .second {
	width: 162px;
	background-color: #555;
	font-size: 13px;
	color: #ddd;
}
.command {
	position: absolute;
	left: 284px;
	bottom: 0;
	display: flex;
	align-items: center;
	width: 455px;
	height: 27px;
	padding-left: 4px;
	border-radius: 2px;
	background-color: #d9d9d9;
	font-family: "DejaVu Sans Mono", "Noto Sans CJK SC", monospace;
	color: #000;
}
.grip.dark {
	width: 5px;
	height: 17px;
	margin: 0 4px 0 0;
	background: repeating-linear-gradient(transparent 0 2px, #d9d9d9 2px 3px), repeating-linear-gradient(90deg, #555 0 2px, transparent 2px 3px);
}
.wrench {
	margin: 0 4px 0 9px;
}
.command label {
	display: flex;
	align-items: center;
	gap: 4px;
	height: 26px;
	padding-left: 4px;
	background-color: #fff;
	font-weight: bold;
}
.command input {
	flex: 1;
	min-width: 0;
	height: 26px;
	padding-left: 2px;
	background-color: #fff;
	font-size: 13px;
}
.cmd-up {
	width: 16px;
	height: 26px;
	background-color: #fff;
}
.cmd-up::before {
	content: "";
	border: 4px solid transparent;
	border-bottom-color: #555;
	border-top: 0;
}
.callout {
	position: absolute;
	inset: -8px -18px -6px -16px;
	border: 5px solid #e03030;
	border-radius: 20px;
	pointer-events: none;
}

/* layout tabs and status bar */
.footer {
	display: flex;
	justify-content: space-between;
	flex: none;
	height: 28px;
	margin: 0 0 4px 3px;
	border-top: 1px solid #bbb;
	background-color: #d9d9d9;
}
.layouts {
	display: flex;
	gap: 4px;
	padding-left: 13px;
}
.layouts a {
	height: 17px;
	padding: 0 10px;
	border-radius: 2px 2px 10px 10px;
	background-color: #e6e6e6;
	line-height: 17px;
}
.layouts .current {
	background-color: #f8f8f8;
	font-weight: bold;
	color: #333;
}
.layouts button {
	width: 22px;
	height: 16px;
	border-radius: 2px 2px 8px 8px;
	background-color: #e6e6e6;
}
.status {
	position: relative;
	display: flex;
	gap: 3px;
	height: 25px;
}
.group {
	display: flex;
	align-items: center;
	background-color: #f5f5f5;
}
.group button {
	width: 24px;
	height: 24px;
}
.group .drop {
	width: 14px;
}
.group .on {
	width: 23px;
	margin: 0 1px;
	border: 1px solid #4b72a6;
	background-color: #cce4fb;
}
.group .model {
	width: 28px;
	font-weight: bold;
	color: #444;
}
.group .scale {
	width: 22px;
	color: #333;
}
.scale + .drop {
	margin-right: -2px;
}
.tray {
	gap: 2px;
}
.last {
	padding-right: 2px;
}
.watermark {
	position: absolute;
	right: 14px;
	top: 0;
	font-size: 19px;
	line-height: 24px;
	color: #888;
	opacity: 0.8;
	white-space: nowrap;
	pointer-events: none;
}
```
